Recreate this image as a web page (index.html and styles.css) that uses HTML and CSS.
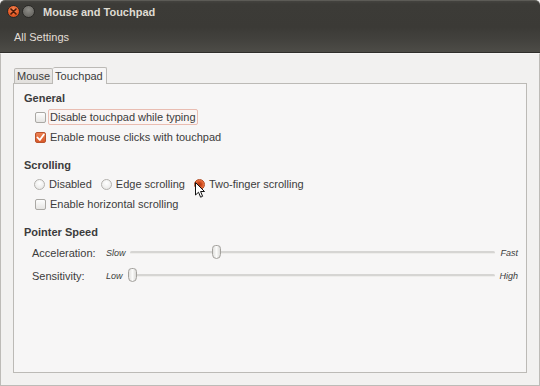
FILE: index.html
```html
<!DOCTYPE html>
<html lang="en">
<head>
    <meta charset="UTF-8">
    <title>Mouse and Touchpad</title>
    <link rel="stylesheet" href="styles.css">
</head>
<body>
    <div class="window">
        <!-- Title bar + toolbar -->
        <div class="header">
            <div class="titlebar">
                <span class="wbtn close">
                    <svg width="7" height="7" viewBox="0 0 7 7"><path d="M1 1 L6 6 M6 1 L1 6" stroke="#4a1a08" stroke-width="1.6" stroke-linecap="round"/></svg>
                </span>
                <span class="wbtn minimize"></span>
                <span class="title">Mouse and Touchpad</span>
            </div>
            <div class="toolbar">
                <span>All Settings</span>
            </div>
        </div>

        <div class="content">
            <div class="tabs">
                <div class="tab">Mouse</div>
                <div class="tab active">Touchpad</div>
            </div>

            <div class="panel">
                <div class="section">
                    <div class="heading">General</div>
                    <div class="row">
                        <span class="check"></span>
                        <span class="focus">Disable touchpad while typing</span>
                    </div>
                    <div class="row">
                        <span class="check checked">
                            <svg width="9" height="9" viewBox="0 0 9 9"><path d="M1.5 4.5 L3.8 7 L7.8 1.5" fill="none" stroke="#fff" stroke-width="1.8" stroke-linecap="round" stroke-linejoin="round"/></svg>
                        </span>
                        <span>Enable mouse clicks with touchpad</span>
                    </div>
                </div>

                <div class="section">
                    <div class="heading">Scrolling</div>
                    <div class="row">
                        <span class="option"><span class="radio"></span>Disabled</span>
                        <span class="option"><span class="radio"></span>Edge scrolling</span>
                        <span class="option">
                            <span class="radio selected"></span>Two-finger scrolling
                            <svg class="pointer" width="11" height="17" viewBox="0 0 11 17"><path d="M0.5 0.5 L0.5 13 L3.5 10.2 L5.6 15.2 L7.6 14.3 L5.6 9.5 L9.5 9.5 Z" fill="#fff" stroke="#111" stroke-width="1" stroke-linejoin="round"/></svg>
                        </span>
                    </div>
                    <div class="row">
                        <span class="check"></span>
                        <span>Enable horizontal scrolling</span>
                    </div>
                </div>

                <div class="section">
                    <div class="heading">Pointer Speed</div>
                    <div class="slider-row">
                        <span class="label">Acceleration:</span>
                        <span class="min">Slow</span>
                        <div class="track"><span class="thumb" style="left: 82px;"></span></div>
                        <span class="max">Fast</span>
                    </div>
                    <div class="slider-row">
                        <span class="label">Sensitivity:</span>
                        <span class="min">Low</span>
                        <div class="track"><span class="thumb" style="left: -2px;"></span></div>
                        <span class="max">High</span>
                    </div>
                </div>
            </div>
        </div>
    </div>
</body>
</html>
```

FILE: styles.css
```css
* { box-sizing: border-box; }
body {
    margin: 0;
    width: 540px;
    height: 386px;
    overflow: hidden;
    font-family: 'Liberation Sans', Arial, sans-serif;
    font-size: 11px;
    color: #3c3c3c;
    background-color: #f2f1f0;
}
.window {
    height: 386px;
    display: flex;
    flex-direction: column;
}
.header {
    height: 53px;
    background: linear-gradient(#44433f 0px, #3c3b37 3px, #3b3a36 26px, #42413d 38px, #4d4c47 51px);
    border-top: 1px solid #5c5b56;
    border-bottom: 1px solid #2f2e2b;
    border-top-right-radius: 5px;
    border-top-left-radius: 5px;
}
.titlebar {
    height: 21px;
    display: flex;
    align-items: center;
    padding-left: 7px;
}
.wbtn {
    width: 13px;
    height: 13px;
    border-radius: 50%;
    display: flex;
    align-items: center;
    justify-content: center;
    margin-right: 2px;
}
.close {
    background: radial-gradient(circle at 50% 35%, #f58a5a, #e45a25 60%, #b8431a);
    border: 1px solid #2a2926;
}
.minimize {
    background: radial-gradient(circle at 50% 35%, #8e8d88, #6f6e69 60%, #5b5a56);
    border: 1px solid #2a2926;
}
.title {
    margin-left: 6px;
    color: #dfdbd2;
    font-weight: bold;
    font-size: 11px;
}
.toolbar {
    height: 30px;
    display: flex;
    align-items: center;
    padding-left: 14px;
    color: #e2ded6;
    font-size: 11px;
}
.content {
    flex: 1;
    display: flex;
    flex-direction: column;
    padding: 13px 12px 12px 12px;
    border: 1px solid #bdbbb7;
    border-top: 1px solid #f7f6f5;
}
.tabs {
    display: flex;
    align-items: flex-end;
    height: 16px;
    padding-left: 1px;
    position: relative;
    z-index: 1;
}
.tab {
    height: 15px;
    line-height: 14px;
    padding: 0 2px;
    border: 1px solid #bcbab6;
    border-bottom: none;
    background: linear-gradient(#eceae8, #e2e0dd);
    border-radius: 2px 2px 0 0;
}
.tab.active {
    height: 17px;
    margin-bottom: -1px;
    line-height: 16px;
    background: #f7f6f6;
    border-left: none;
    padding: 0 3px 0 2px;
}
.panel {
    flex: 1;
    background: #f7f6f6;
    border: 1px solid #bcbab6;
    padding: 6px 8px 0 10px;
}
.section {
    margin-bottom: 10px;
}
.heading {
    height: 17px;
    line-height: 17px;
    font-weight: bold;
}
.row {
    height: 20px;
    display: flex;
    align-items: center;
    padding-left: 11px;
}
.check {
    width: 11px;
    height: 11px;
    border: 1px solid #aaa8a4;
    border-radius: 2px;
    background: linear-gradient(#fdfdfd, #e6e5e3);
    margin-right: 4px;
    display: flex;
    align-items: center;
    justify-content: center;
}
.check.checked {
    background: linear-gradient(#ee8253, #d9592a);
    border-color: #b9532d;
}
.focus {
    border: 1px solid #e9bdb2;
    border-radius: 2px;
    padding: 1px 1px 1px 1px;
    margin-left: -2px;
    background: #faf5f4;
}
.option {
    display: flex;
    align-items: center;
    margin-right: 10px;
    position: relative;
}
.radio {
    width: 11px;
    height: 11px;
    border-radius: 50%;
    border: 1px solid #b3b1ad;
    background: radial-gradient(circle at 50% 35%, #ffffff, #e4e3e1);
    margin-left: -1px;
    margin-right: 4px;
}
.radio.selected {
    border-color: #b14a22;
    background: radial-gradient(circle, #a93b15 0px, #c9461b 2px, #ea6e3c 4px, #f08b5e 6px);
}
.pointer {
    position: absolute;
    left: 0px;
    top: 4px;
}
.slider-row {
    height: 23px;
    display: flex;
    align-items: center;
    padding-left: 8px;
}
.label {
    width: 74px;
}
.min {
    width: 24px;
    font-style: italic;
    font-size: 9px;
}
.track {
    flex: 1;
    height: 3px;
    background: #d6d5d3;
    border-bottom: 1px solid #eeedeb;
    border-radius: 2px;
    position: relative;
}
.thumb {
    position: absolute;
    top: -6px;
    width: 9px;
    height: 14px;
    border: 1px solid #a3a19d;
    border-radius: 4px 4px 5px 5px;
    background: linear-gradient(90deg, #e2e1df, #fbfbfa 50%, #dcdbd9);
}
.max {
    width: 23px;
    text-align: right;
    font-style: italic;
    font-size: 9px;
}
```
